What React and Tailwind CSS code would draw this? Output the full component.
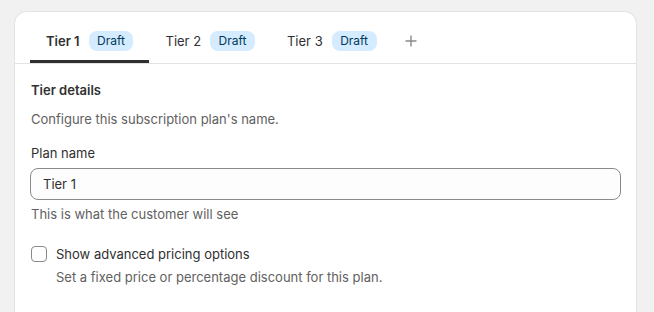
import React from "react";

function Badge() {
  return (
    <span className="inline-flex h-5 items-center rounded-lg bg-[#d5ebff] px-[8.5px] text-[12px] leading-5 text-[#003a5a]">
      Draft
    </span>
  );
}

function Tab({ label, active }) {
  return (
    <div
      className={
        "flex items-center gap-[9px] px-4 pb-[9px] border-b-[3px] rounded-t-[1px] " +
        (active ? "border-[#303030]" : "border-transparent")
      }
    >
      <span
        className={
          "text-[13px] leading-5 text-[#303030] " +
          (active ? "font-semibold" : "font-normal")
        }
      >
        {label}
      </span>
      <Badge />
    </div>
  );
}

export default function App() {
  return (
    <div
      className="min-h-[312px] h-[312px] overflow-hidden bg-[#f1f1f1] pt-3 pl-[15px]"
      style={{ fontFamily: "Inter, 'Noto Sans', sans-serif" }}
    >
      <div className="w-[621px] h-[320px] rounded-t-xl bg-white shadow-[0_0_0_1px_#e3e3e3]">
        <div className="flex items-end border-b border-[#e3e3e3] pl-[15px] pt-[19px]">
          <Tab label="Tier 1" active />
          <Tab label="Tier 2" />
          <Tab label="Tier 3" />
          <div className="flex items-center pl-3 pr-4 pb-[12px] pt-0 self-end">
            <svg width="12" height="12" viewBox="0 0 12 12" className="mb-[4px]">
              <path d="M6 0.5V11.5M0.5 6H11.5" stroke="#8a8a8a" strokeWidth="1.4" />
            </svg>
          </div>
        </div>
        <div className="px-[15px] pt-4 text-[13px] leading-5 text-[#303030]">
          <div className="pl-px font-semibold">Tier details</div>
          <div className="mt-[9px] pl-px text-[#616161]">
            Configure this subscription plan's name.
          </div>
          <div className="mt-[14px] pl-px">Plan name</div>
          <div className="mt-[5px] flex h-8 items-center rounded-lg border border-[#8a8a8a] bg-[#fdfdfd] px-3">
            Tier 1
          </div>
          <div className="mt-1 pl-px text-[#616161]">This is what the customer will see</div>
          <div className="mt-5 flex items-center gap-[9px] pl-[1px]">
            <div className="h-4 w-4 rounded-[4px] border border-[#8a8a8a] bg-white" />
            <span>Show advanced pricing options</span>
          </div>
          <div className="mt-[3px] pl-[26px] text-[#616161]">
            Set a fixed price or percentage discount for this plan.
          </div>
        </div>
      </div>
    </div>
  );
}
